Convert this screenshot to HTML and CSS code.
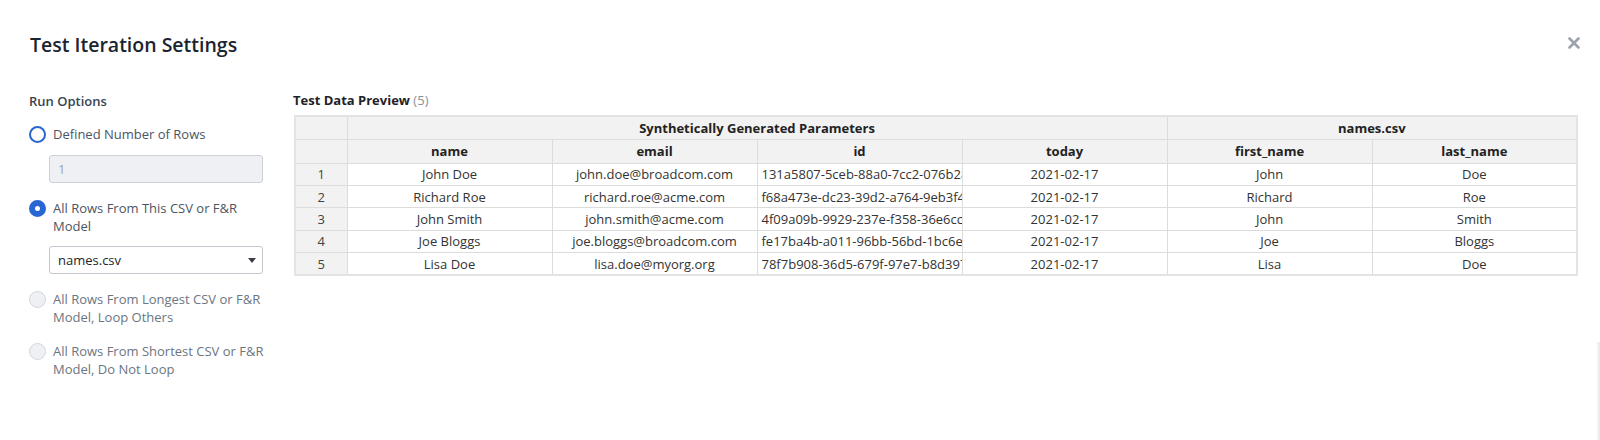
FILE: index.html
```html
<!DOCTYPE html>
<html lang="en">
<head>
<meta charset="utf-8">
<title>Test Iteration Settings</title>
<link rel="stylesheet" href="styles.css">
</head>
<body>
<div class="dialog">
  <div class="header">
    <h1 class="title">Test Iteration Settings</h1>
    <button class="close" aria-label="Close">
      <svg width="12" height="12" viewBox="0 0 12 12"><path d="M1.5 1.5 L10.5 10.5 M10.5 1.5 L1.5 10.5" stroke="#9ca2aa" stroke-width="2.6" stroke-linecap="round"/></svg>
    </button>
  </div>
  <div class="content">
    <div class="options">
      <div class="section-label">Run Options</div>
      <div class="radio-row first">
        <span class="radio"></span>
        <span class="radio-label">Defined Number of Rows</span>
      </div>
      <div class="field input disabled">1</div>
      <div class="radio-row">
        <span class="radio checked"></span>
        <span class="radio-label">All Rows From This CSV or F&amp;R<br>Model</span>
      </div>
      <div class="field select">
        <span>names.csv</span>
        <span class="caret"></span>
      </div>
      <div class="radio-row">
        <span class="radio off"></span>
        <span class="radio-label muted">All Rows From Longest CSV or F&amp;R<br>Model, Loop Others</span>
      </div>
      <div class="radio-row">
        <span class="radio off"></span>
        <span class="radio-label muted">All Rows From Shortest CSV or F&amp;R<br>Model, Do Not Loop</span>
      </div>
    </div>
    <div class="preview">
      <div class="preview-title"><strong>Test Data Preview</strong> <span class="count">(5)</span></div>
      <table class="grid">
        <colgroup>
          <col class="c-num"><col class="c"><col class="c"><col class="c"><col class="c"><col class="c"><col class="c">
        </colgroup>
        <thead>
          <tr class="h1"><th class="num"></th><th colspan="4">Synthetically Generated Parameters</th><th colspan="2">names.csv</th></tr>
          <tr class="h2"><th class="num"></th><th>name</th><th>email</th><th>id</th><th>today</th><th>first_name</th><th>last_name</th></tr>
        </thead>
        <tbody>
          <tr><td class="num">1</td><td>John Doe</td><td>john.doe@broadcom.com</td><td class="id">131a5807-5ceb-88a0-7cc2-076b28e4f1a9</td><td>2021-02-17</td><td>John</td><td>Doe</td></tr>
          <tr><td class="num">2</td><td>Richard Roe</td><td>richard.roe@acme.com</td><td class="id">f68a473e-dc23-39d2-a764-9eb3f4c07d12</td><td>2021-02-17</td><td>Richard</td><td>Roe</td></tr>
          <tr><td class="num">3</td><td>John Smith</td><td>john.smith@acme.com</td><td class="id">4f09a09b-9929-237e-f358-36e6cc7a91b0</td><td>2021-02-17</td><td>John</td><td>Smith</td></tr>
          <tr><td class="num">4</td><td>Joe Bloggs</td><td>joe.bloggs@broadcom.com</td><td class="id">fe17ba4b-a011-96bb-56bd-1bc6ea2f83d5</td><td>2021-02-17</td><td>Joe</td><td>Bloggs</td></tr>
          <tr><td class="num">5</td><td>Lisa Doe</td><td>lisa.doe@myorg.org</td><td class="id">78f7b908-36d5-679f-97e7-b8d397e6a4c3</td><td>2021-02-17</td><td>Lisa</td><td>Doe</td></tr>
        </tbody>
      </table>
    </div>
  </div>
  <div class="edge"></div>
</div>
</body>
</html>
```
FILE: styles.css
```css
* { box-sizing: border-box; }
html, body { margin: 0; padding: 0; background: #fff; }
body {
  font-family: "Open Sans", "Liberation Sans", sans-serif;
  color: #333;
  width: 1600px;
  height: 440px;
  overflow: hidden;
}
.dialog {
  position: relative;
  height: 440px;
  padding: 31px 20px 0 29px;
}
.header {
  display: flex;
  justify-content: space-between;
  align-items: flex-start;
}
.title {
  margin: 0;
  font-size: 19.5px;
  line-height: 28px;
  font-weight: 600;
  color: #1c2430;
  padding-left: 1px;
}
.close {
  border: 0;
  background: none;
  padding: 0;
  margin-top: 6px;
  width: 12px;
  height: 12px;
  display: block;
  cursor: pointer;
}
.close svg { display: block; }
.content {
  display: flex;
  margin-top: 32px;
}
.options {
  width: 234px;
  flex: none;
  padding-top: 1px;
}
.section-label {
  font-size: 13px;
  line-height: 18px;
  font-weight: 600;
  color: #3a4450;
}
.radio-row {
  display: flex;
  align-items: flex-start;
  gap: 7px;
  margin-top: 16px;
}
.radio-row.first { margin-top: 15px; }
.radio {
  width: 17px;
  height: 17px;
  border-radius: 50%;
  border: 2px solid #2866d1;
  background: #fff;
  flex: none;
  margin-top: 1px;
}
.radio.checked { border-width: 6px; }
.radio.off {
  border: 1px solid #d2d7de;
  background: #eef0f4;
}
.radio-label {
  font-size: 13px;
  line-height: 18px;
  color: #4b5562;
  white-space: nowrap;
}
.radio-label.muted { color: #6c7580; }
.field {
  margin-left: 20px;
  width: 214px;
  height: 28px;
  border-radius: 3px;
  font-size: 13px;
  line-height: 26px;
  padding: 0 8px;
}
.input {
  margin-top: 12px;
  background: #eef0f3;
  border: 1px solid #cdd2d9;
  color: #9ea4ab;
}
.select {
  margin-top: 11px;
  background: #fff;
  border: 1px solid #c3c8cf;
  color: #1f2328;
  display: flex;
  justify-content: space-between;
  align-items: center;
}
.caret {
  width: 0;
  height: 0;
  border-left: 4px solid transparent;
  border-right: 4px solid transparent;
  border-top: 5px solid #3a3f47;
  margin-right: -2px;
}
.preview {
  margin-left: 31px;
  flex: none;
}
.preview-title {
  font-size: 13px;
  line-height: 18px;
  color: #1f2328;
  margin-left: -1px;
}
.preview-title strong { font-weight: 700; }
.count { color: #8a9098; }
.grid {
  margin-top: 6px;
  border-collapse: collapse;
  table-layout: fixed;
  width: 1283px;
  border: 2px solid #e3e3e3;
  font-size: 13px;
  color: #333;
}
.c-num { width: 52px; }
.c { width: 205px; }
.grid th, .grid td {
  border: 1px solid #dcdcdc;
  padding: 0 4px;
  text-align: center;
  white-space: nowrap;
  overflow: hidden;
  line-height: 18px;
}
.grid th {
  background: #f2f2f2;
  font-weight: 700;
  color: #222;
}
.grid tr.h1 { height: 23px; }
.grid tr.h2 { height: 24px; }
.grid tbody tr { height: 22.4px; }
.grid td.num {
  background: #f2f2f2;
  color: #444;
}
.grid td.id {
  text-align: left;
  text-overflow: clip;
}
.edge {
  position: absolute;
  right: 0;
  top: 342px;
  bottom: 0;
  width: 4px;
  background: linear-gradient(to right, rgba(255,255,255,0), #e6e6e6);
}
```
